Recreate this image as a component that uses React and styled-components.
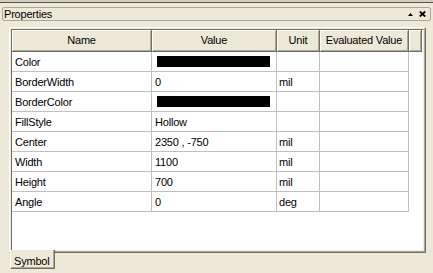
import React from 'react';
import styled, { createGlobalStyle } from 'styled-components';

const Global = createGlobalStyle`
  html, body { margin: 0; padding: 0; background: #ece9d8; }
  body {
    width: 433px; height: 273px; overflow: hidden;
    font-family: "Liberation Sans", Arial, sans-serif;
    font-size: 11px; color: #000;
  }
  * { box-sizing: border-box; }
`;

const Window = styled.div`
  width: 433px; height: 273px;
  display: flex; flex-direction: column;
  background: #ece9d8;
`;

const TopRule = styled.div`
  height: 3px;
  background: #d2cec0;
  border-bottom: 1px solid #55534a;
`;

const TitleBar = styled.div`
  margin: 4px 2px 0 2px;
  height: 14px;
  border: 1px solid #aca899;
  border-radius: 2px;
  display: flex; align-items: center;
  padding: 0 4px 0 1px;
`;

const TitleText = styled.span`
  flex: 1;
  letter-spacing: -0.2px;
  line-height: 12px;
`;

const TitleIcons = styled.div`
  display: flex; align-items: center; gap: 6px;
`;

const Panel = styled.div`
  margin: 6px 0 0 9px;
  width: 417px; height: 226px;
  border-top: 1px solid #ffffff;
  border-left: 1px solid #ffffff;
  border-right: 1px solid #716f64;
  border-bottom: 1px solid #716f64;
  box-shadow: inset -1px -1px 0 #aca899;
  padding: 1px;
  display: flex;
`;

const Grid = styled.div`
  flex: 1;
  background: #fff;
  border-top: 1px solid #716f64;
  border-left: 1px solid #716f64;
  border-right: 1px solid #f1efe2;
  border-bottom: 1px solid #f1efe2;
  display: flex; flex-direction: column;
`;

const HeaderRow = styled.div`
  display: flex; height: 22px;
`;

const HeaderCell = styled.div`
  width: ${p => p.$w}px; height: 22px;
  background: #ece9d8;
  border-right: 1px solid #716f64;
  border-bottom: 1px solid #716f64;
  box-shadow: inset 1px 1px 0 #ffffff, inset -1px -1px 0 #aca899;
  display: flex; align-items: center; justify-content: center;
  letter-spacing: -0.2px;
  padding-bottom: 1px;
`;

const Row = styled.div`
  display: flex; height: 20px;
`;

const Cell = styled.div`
  width: ${p => p.$w}px; height: 20px;
  border-right: 1px solid #c0c0c0;
  border-bottom: 1px solid #c0c0c0;
  display: flex; align-items: center;
  padding-left: ${p => p.$pad ?? 3}px;
  letter-spacing: -0.2px;
  white-space: nowrap;
`;

const Swatch = styled.div`
  width: 113px; height: 11px;
  background: #000;
  margin-left: 3px;
`;

const TabStrip = styled.div`
  display: flex;
  padding-left: 10px;
  margin-top: -3px;
`;

const Tab = styled.div`
  position: relative; z-index: 1;
  width: 45px; height: 19px;
  background: #ece9d8;
  border-left: 1px solid #ffffff;
  border-right: 1px solid #716f64;
  border-bottom: 1px solid #716f64;
  box-shadow: inset -1px -1px 0 #aca899;
  padding: 5px 0 0 3px;
  letter-spacing: -0.2px;
  line-height: 12px;
`;

const COLS = [140, 125, 43, 89];

const rows = [
  ['Color', 'swatch', '', ''],
  ['BorderWidth', '0', 'mil', ''],
  ['BorderColor', 'swatch', '', ''],
  ['FillStyle', 'Hollow', '', ''],
  ['Center', '2350 , -750', 'mil', ''],
  ['Width', '1100', 'mil', ''],
  ['Height', '700', 'mil', ''],
  ['Angle', '0', 'deg', ''],
];

export default function App() {
  return (
    <Window>
      <Global />
      <TopRule />
      <TitleBar>
        <TitleText>Properties</TitleText>
        <TitleIcons>
          <svg width="5" height="3" viewBox="0 0 5 3">
            <polygon points="2.5,0 5,3 0,3" fill="#000" />
          </svg>
          <svg width="7" height="6" viewBox="0 0 7 6">
            <path d="M0.8 0.5 L6.2 5.5 M6.2 0.5 L0.8 5.5" stroke="#000" strokeWidth="1.8" fill="none" />
          </svg>
        </TitleIcons>
      </TitleBar>
      <Panel>
        <Grid>
          <HeaderRow>
            <HeaderCell $w={140}>Name</HeaderCell>
            <HeaderCell $w={125}>Value</HeaderCell>
            <HeaderCell $w={43}>Unit</HeaderCell>
            <HeaderCell $w={89}>Evaluated Value</HeaderCell>
            <HeaderCell $w={13} />
          </HeaderRow>
          {rows.map((r) => (
            <Row key={r[0]}>
              <Cell $w={COLS[0]}>{r[0]}</Cell>
              <Cell $w={COLS[1]} $pad={r[1] === 'swatch' ? 2 : 3}>
                {r[1] === 'swatch' ? <Swatch /> : r[1]}
              </Cell>
              <Cell $w={COLS[2]} $pad={2}>{r[2]}</Cell>
              <Cell $w={COLS[3]}>{r[3]}</Cell>
            </Row>
          ))}
        </Grid>
      </Panel>
      <TabStrip>
        <Tab>Symbol</Tab>
      </TabStrip>
    </Window>
  );
}
